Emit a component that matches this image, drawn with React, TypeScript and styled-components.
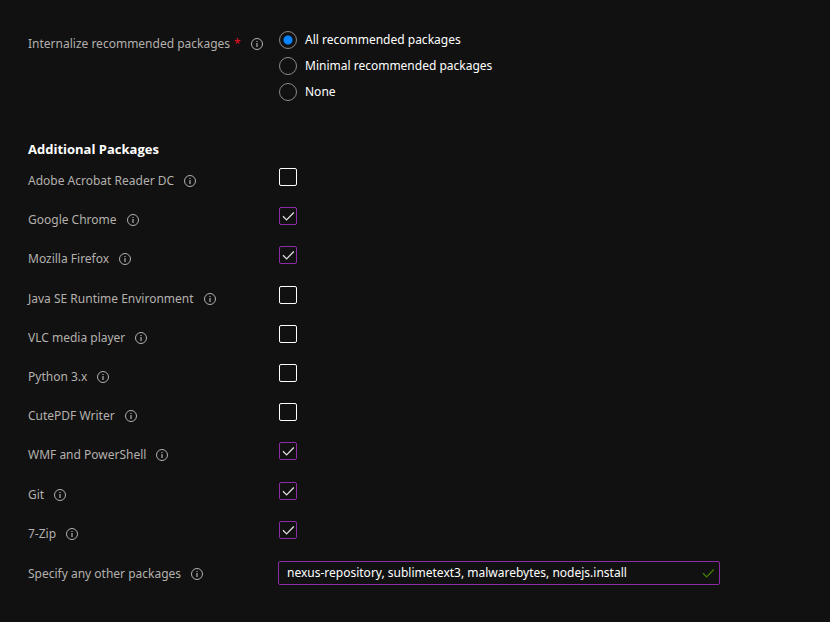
import React, { useId, useState } from "react";
import styled, { createGlobalStyle, css } from "styled-components";

const GlobalStyle = createGlobalStyle`
  *, *::before, *::after { box-sizing: border-box; }
  body {
    margin: 0;
    background: #111111;
    color: #ffffff;
    font-family: "Noto Sans", sans-serif;
    font-size: 12px;
    line-height: 18px;
  }
`;

const Form = styled.form`
  padding: 31px 110px 37px 28px;
`;

const rowLayout = css`
  display: grid;
  grid-template-columns: 250px minmax(0, 1fr);
  align-items: start;
`;

const FieldRow = styled.div`
  ${rowLayout}
`;

const LabelCell = styled.div`
  display: flex;
  align-items: center;
  gap: 10px;
  padding-top: 4px;
  color: #b3b0ad;
  white-space: nowrap;
`;

const Required = styled.span`
  margin-left: 4px;
  color: #e81123;
`;

const InfoButton = styled.button`
  display: flex;
  padding: 0;
  border: 0;
  background: none;
  color: #b3b0ad;
  cursor: pointer;
`;

const RadioGroup = styled.div`
  display: grid;
  gap: 8px;
  padding-left: 1px;
`;

const RadioLabel = styled.label`
  display: flex;
  align-items: center;
  gap: 8px;
`;

const Radio = styled.input`
  appearance: none;
  flex: none;
  width: 18px;
  height: 18px;
  margin: 0;
  border: 1px solid #8a8886;
  border-radius: 50%;

  &:checked {
    background: radial-gradient(circle, #0a84ff 4px, transparent 5px);
  }
`;

const Heading = styled.h2`
  margin: 39px 0 10px;
  font-family: "Open Sans", sans-serif;
  font-size: 13px;
  line-height: 18px;
  font-weight: 700;
`;

const PackageList = styled.div`
  display: grid;
  grid-auto-rows: 1fr;
  min-height: 393px;
  padding-bottom: 1px;
`;

const CheckBox = styled.span`
  display: grid;
  width: 18px;
  height: 18px;
  margin-left: 1px;

  & > * {
    grid-area: 1 / 1;
  }

  & > svg {
    pointer-events: none;
    visibility: hidden;
  }

  & > input:checked + svg {
    visibility: visible;
  }
`;

const CheckInput = styled.input`
  appearance: none;
  width: 18px;
  height: 18px;
  margin: 0;
  border: 1px solid #ffffff;
  border-radius: 2px;

  &:checked {
    border-color: #8a2da5;
  }
`;

const TextField = styled.div`
  display: flex;
  align-items: center;
  height: 24px;
  padding: 0 2px 0 8px;
  border: 1px solid #8a2da5;
  border-radius: 2px;
`;

const TextInput = styled.input`
  flex: 1;
  min-width: 0;
  padding: 0;
  border: 0;
  outline: 0;
  background: none;
  color: #ffffff;
  font: inherit;
`;

function InfoIcon() {
  return (
    <svg width="12" height="12" viewBox="0 0 12 12" fill="none" aria-hidden="true">
      <circle cx="6" cy="6" r="5.5" stroke="currentColor" />
      <path d="M6 5v4M6 3v1" stroke="currentColor" strokeWidth="1.2" />
    </svg>
  );
}

function TickIcon({ color }: { color: string }) {
  return (
    <svg width="18" height="18" viewBox="0 0 18 18" fill="none" aria-hidden="true">
      <path d="M4 9.3L7.6 12.9L14.8 5.5" stroke={color} strokeWidth="1.3" />
    </svg>
  );
}

function Info({ topic }: { topic: string }) {
  return (
    <InfoButton type="button" aria-label={`About ${topic}`}>
      <InfoIcon />
    </InfoButton>
  );
}

const scopes = ["All recommended packages", "Minimal recommended packages", "None"];

const packages = [
  { name: "Adobe Acrobat Reader DC", selected: false },
  { name: "Google Chrome", selected: true },
  { name: "Mozilla Firefox", selected: true },
  { name: "Java SE Runtime Environment", selected: false },
  { name: "VLC media player", selected: false },
  { name: "Python 3.x", selected: false },
  { name: "CutePDF Writer", selected: false },
  { name: "WMF and PowerShell", selected: true },
  { name: "Git", selected: true },
  { name: "7-Zip", selected: true },
];

function PackageRow({ name, selected }: { name: string; selected: boolean }) {
  const id = useId();
  return (
    <FieldRow>
      <LabelCell>
        <label htmlFor={id}>{name}</label>
        <Info topic={name} />
      </LabelCell>
      <CheckBox>
        <CheckInput id={id} type="checkbox" defaultChecked={selected} />
        <TickIcon color="#e1dfdd" />
      </CheckBox>
    </FieldRow>
  );
}

export default function App() {
  const [scope, setScope] = useState(scopes[0]);
  const [others, setOthers] = useState("nexus-repository, sublimetext3, malwarebytes, nodejs.install");

  return (
    <>
      <GlobalStyle />
      <Form>
        <FieldRow>
          <LabelCell>
            <span id="scope-label">
              Internalize recommended packages
              <Required>*</Required>
            </span>
            <Info topic="recommended packages" />
          </LabelCell>
          <RadioGroup role="radiogroup" aria-labelledby="scope-label">
            {scopes.map((option) => (
              <RadioLabel key={option}>
                <Radio
                  type="radio"
                  name="scope"
                  checked={scope === option}
                  onChange={() => setScope(option)}
                />
                {option}
              </RadioLabel>
            ))}
          </RadioGroup>
        </FieldRow>

        <Heading>Additional Packages</Heading>
        <PackageList>
          {packages.map((item) => (
            <PackageRow key={item.name} {...item} />
          ))}
        </PackageList>

        <FieldRow>
          <LabelCell>
            <label htmlFor="other-packages">Specify any other packages</label>
            <Info topic="other packages" />
          </LabelCell>
          <TextField>
            <TextInput
              id="other-packages"
              type="text"
              value={others}
              onChange={(event) => setOthers(event.target.value)}
            />
            <TickIcon color="#428000" />
          </TextField>
        </FieldRow>
      </Form>
    </>
  );
}
